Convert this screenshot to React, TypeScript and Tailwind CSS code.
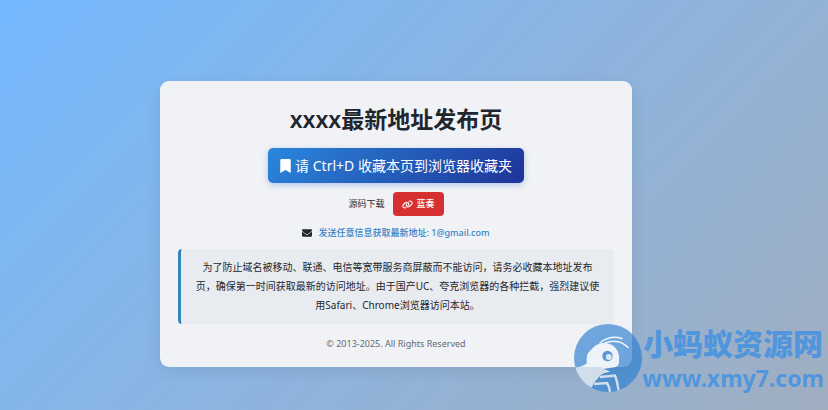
import { FaBookmark, FaEnvelope } from "react-icons/fa";
import { FaLink } from "react-icons/fa6";

function AntLogo() {
  return (
    <svg viewBox="0 0 68 68" className="h-[68px] w-[68px] shrink-0" aria-hidden="true">
      <defs>
        <clipPath id="disc">
          <circle cx="34" cy="34" r="34" />
        </clipPath>
      </defs>
      <circle cx="34" cy="34" r="34" fill="#2f80d2" fillOpacity="0.68" />
      <g clipPath="url(#disc)">
        <path
          d="M13 39 C12 33 13 29 17 26 C22 19 31 17 38 21 C43 24 46 30 45 37 C45 42 43 43 39 43.500 L29 45 L36 47.500 C32 49 27 49 25 53 C22 56 20 58 18 63 L14 66 L0 56 L0 44 C5 43 10 42 13 39 Z"
          fill="#f4f7fa"
          fillOpacity="0.95"
        />
        <path d="M0 43 H28 L30 46.500 L34 47.500 C28 49 26 51 24 54 C21 57 19 60 17 64 L0 60 Z" fill="#c3d2e3" fillOpacity="0.65" />
        <path d="M26 19 C32 14 40 12 48 14.500" fill="none" stroke="#f1f4f8" strokeWidth="1.5" strokeLinecap="round" />
        <path d="M31 19 C40 15 49 18 54 23.500" fill="none" stroke="#f1f4f8" strokeWidth="1.5" strokeLinecap="round" />
        <circle cx="33.500" cy="32" r="5.200" fill="#5797d5" />
        <circle cx="34.800" cy="33" r="3" fill="#dce8f4" />
        <path d="M26 53 L41 51.500 C43 56 44 62 45 70" fill="none" stroke="#d3deea" strokeWidth="2.4" />
        <path d="M20 60 L33 59 C35 62 36 65 36 70" fill="none" stroke="#d3deea" strokeWidth="2.4" />
      </g>
    </svg>
  );
}

function Watermark() {
  return (
    <div className="pointer-events-none absolute right-1 bottom-4 flex items-center">
      <AntLogo />
      <div className="flex flex-col items-center pt-1 font-bold text-[#3c8fe3]/80">
        <span className="text-[30px] leading-[36px] font-black">小蚂蚁资源网</span>
        <span className="text-[23px] leading-[32px]">www.xmy7.com</span>
      </div>
    </div>
  );
}

export default function App() {
  return (
    <div className="relative flex min-h-screen items-center justify-center overflow-hidden bg-linear-135 from-[#74b9ff] to-[#a0aec0] pt-[38px] pr-9 font-['Noto_Sans','Noto_Sans_CJK_SC',sans-serif] text-[#1f272e]">
      <main className="flex w-full max-w-[472px] flex-col items-center gap-[9px] rounded-[9px] bg-[#f1f2f5] px-[18px] pt-[18px] pb-4 text-center shadow-[0_4px_16px_rgba(0,0,0,0.08)]">
        <h1 className="text-[23px] leading-[40px] font-semibold">xxxx最新地址发布页</h1>
        <button
          type="button"
          className="flex h-[35px] items-center gap-1 rounded-[5px] bg-linear-135 from-[#2b87dd] to-[#1f3399] px-3 text-[14px] text-white shadow-[0_2px_6px_rgba(30,100,200,0.3)]"
        >
          <FaBookmark className="h-[14px] w-[11px]" />
          请 Ctrl+D 收藏本页到浏览器收藏夹
        </button>
        <div className="flex items-center gap-2 text-[9px]">
          <span>源码下载</span>
          <a
            href="#download"
            className="flex h-6 items-center gap-1 rounded-[4px] bg-[#d63031] px-[9px] font-medium text-white"
          >
            <FaLink className="h-[11px] w-[11px]" />
            蓝奏
          </a>
        </div>
        <div className="flex items-center gap-[6px] text-[9px] leading-[15px]">
          <FaEnvelope className="h-[10px] w-[10px]" />
          <a href="mailto:1@gmail.com" className="font-medium text-[#3584c7]">
            发送任意信息获取最新地址: 1@gmail.com
          </a>
        </div>
        <p className="w-full rounded-[4px] border-l-[3px] border-[#3584b8] bg-[#e8ebf0] px-[14px] py-[9px] text-[10px] leading-[19px]">
          为了防止域名被移动、联通、电信等宽带服务商屏蔽而不能访问，请务必收藏本地址发布页，确保第一时间获取最新的访问地址。由于国产UC、夸克浏览器的各种拦截，强烈建议使用Safari、Chrome浏览器访问本站。
        </p>
        <footer className="pt-1 text-[9px] leading-[14px] text-[#636b73]">© 2013-2025. All Rights Reserved</footer>
      </main>
      <Watermark />
    </div>
  );
}
